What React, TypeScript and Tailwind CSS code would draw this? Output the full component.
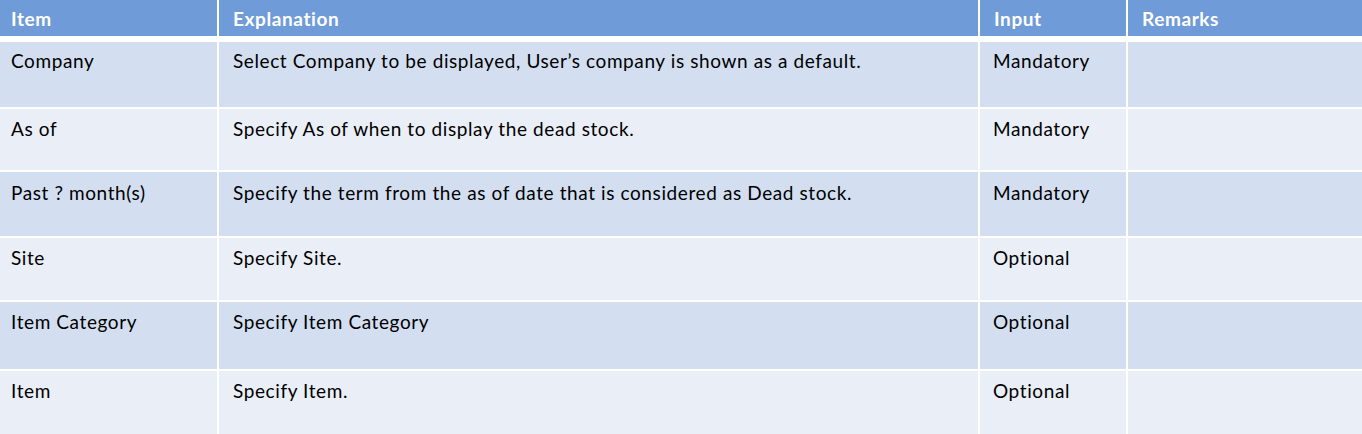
const rows = [
  { item: 'Company', explanation: 'Select Company to be displayed, User\u2019s company is shown as a default.', input: 'Mandatory', h: 'h-[65px]', pt: 'pt-[5px]' },
  { item: 'As of', explanation: 'Specify As of when to display the dead stock.', input: 'Mandatory', h: 'h-[61px]', pt: 'pt-[6px]' },
  { item: 'Past ? month(s)', explanation: 'Specify the term from the as of date that is considered as Dead stock.', input: 'Mandatory', h: 'h-[64px]', pt: 'pt-[7px]' },
  { item: 'Site', explanation: 'Specify Site.', input: 'Optional', h: 'h-[62px]', pt: 'pt-[6px]' },
  { item: 'Item Category', explanation: 'Specify Item Category', input: 'Optional', h: 'h-[67px]', pt: 'pt-[6px]' },
  { item: 'Item', explanation: 'Specify Item.', input: 'Optional', h: 'h-[63px]', pt: 'pt-[6px]' },
];

export default function App() {
  return (
    <div className="w-[1362px] h-[434px] overflow-hidden bg-white text-[19px] tracking-[0.6px] text-black font-['Lato',sans-serif]">
      <div className="grid grid-cols-[217px_759px_146px_1fr] gap-x-[2px] h-[36px] bg-white">
        <div className="bg-[#6f9bd8] text-white font-bold pl-[11px] pt-[5px]">Item</div>
        <div className="bg-[#6f9bd8] text-white font-bold pl-[14px] pt-[5px]">Explanation</div>
        <div className="bg-[#6f9bd8] text-white font-bold pl-[14px] pt-[5px]">Input</div>
        <div className="bg-[#6f9bd8] text-white font-bold pl-[14px] pt-[5px]">Remarks</div>
      </div>
      <div className="flex flex-col gap-y-[2px] mt-[6px]">
        {rows.map((r, i) => {
          const bg = i % 2 === 0 ? 'bg-[#d3dff0]' : 'bg-[#e9eef7]';
          return (
            <div key={r.item} className={`grid grid-cols-[217px_759px_146px_1fr] gap-x-[2px] ${r.h}`}>
              <div className={`${bg} pl-[11px] ${r.pt}`}>{r.item}</div>
              <div className={`${bg} pl-[14px] ${r.pt}`}>{r.explanation}</div>
              <div className={`${bg} pl-[13px] ${r.pt}`}>{r.input}</div>
              <div className={bg}></div>
            </div>
          );
        })}
      </div>
    </div>
  );
}
